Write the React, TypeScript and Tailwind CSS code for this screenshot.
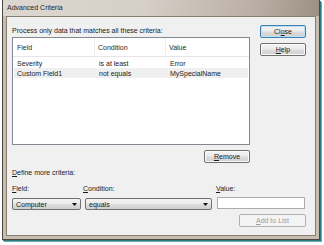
const font = { fontFamily: '"Liberation Sans", Arial, sans-serif' };

function Btn({ label, u, wide = 'w-[46px]', variant = 'normal' }: { label: string; u: number; wide?: string; variant?: 'normal' | 'default' | 'disabled' }) {
  const border =
    variant === 'default'
      ? 'border-[#3c7fb1] shadow-[inset_0_0_0_1px_#b9e3f4]'
      : variant === 'disabled'
        ? 'border-[#adb2b5]'
        : 'border-[#707070] shadow-[inset_0_0_0_1px_#fbfbfb]';
  const bg =
    variant === 'disabled'
      ? 'bg-[#f4f4f4] text-[#9a9a9a]'
      : 'bg-[linear-gradient(180deg,#f3f3f3_0%,#ebebeb_48%,#dddddd_52%,#cfcfcf_100%)] text-[#1a1a1a]';
  return (
    <div className={`${wide} h-[13px] rounded-[2px] border ${border} ${bg} flex items-center justify-center text-[7px] leading-none`}>
      <span>
        {label.slice(0, u)}
        <span className="underline underline-offset-1">{label[u]}</span>
        {label.slice(u + 1)}
      </span>
    </div>
  );
}

function Combo({ text }: { text: string }) {
  return (
    <div className="h-[12px] rounded-[2px] border border-[#707070] bg-[linear-gradient(180deg,#f2f2f2_0%,#ebebeb_48%,#dddddd_52%,#cfcfcf_100%)] flex items-center justify-between pl-[3px] pr-[3px] text-[7px] leading-none text-[#1a1a1a]">
      <span>{text}</span>
      <svg width="5" height="3" viewBox="0 0 5 3">
        <path d="M0 0h5L2.5 3z" fill="#111" />
      </svg>
    </div>
  );
}

function Mn({ t }: { t: string }) {
  return (
    <span>
      <span className="underline underline-offset-1">{t[0]}</span>
      {t.slice(1)}
    </span>
  );
}

export default function App() {
  const rows = [
    { f: 'Severity', c: 'is at least', v: 'Error', sel: false },
    { f: 'Custom Field1', c: 'not equals', v: 'MySpecialName', sel: true },
  ];
  return (
    <div className="w-[324px] h-[245px] bg-white" style={font}>
      <div className="ml-[2px] w-[318px] h-[240px] flex flex-col border-x border-b border-[#4e4740] bg-[#c7bcb0] shadow-[1px_1px_0_#2f7a80,2px_2px_0_#6aa9ad]">
        <div className="h-[16px] flex items-center pl-[4px] text-[7px] text-[#1e1e1e] bg-[linear-gradient(100deg,#ddd7d1_0%,#d6cfc7_45%,#b9aea3_80%,#9c9085_100%)]">
          Advanced Criteria
        </div>
        <div className="flex-1 mx-[3px] mb-[3px] border border-[#8a7f75] bg-[#f0f0f0] pl-[5px] text-[7px] leading-none text-[#1a1a1a]">
          <div className="flex">
            <div className="w-[238px]">
              <div className="pt-[10px] h-[20px]">Process only data that matches all these criteria:</div>
              <div className="h-[108px] border border-[#828790] bg-white">
                <div className="h-[19px] flex items-center border-b border-[#e5e5e5] text-[#2a2a2a]">
                  <div className="w-[82px] h-full flex items-center pl-[4px] border-r border-[#ececec]">Field</div>
                  <div className="w-[71px] h-full flex items-center pl-[3px] border-r border-[#ececec]">Condition</div>
                  <div className="pl-[3px]">Value</div>
                </div>
                <div className="pt-[1px] px-[1px]">
                  {rows.map((r) => (
                    <div key={r.f} className={`h-[10px] flex items-center ${r.sel ? 'bg-[#efefef]' : ''}`}>
                      <div className="w-[82px] pl-[3px]">{r.f}</div>
                      <div className="w-[71px] pl-[3px]">{r.c}</div>
                      <div className="pl-[3px]">{r.v}</div>
                    </div>
                  ))}
                </div>
              </div>
            </div>
            <div className="ml-[10px] pt-[8px] flex flex-col gap-[5px]">
              <Btn label="Close" u={2} variant="default" />
              <Btn label="Help" u={0} />
            </div>
          </div>
          <div className="w-[238px] flex justify-end mt-[5px]">
            <Btn label="Remove" u={0} />
          </div>
          <div className="mt-[4px] h-[10px] flex items-center">
            <Mn t="Define more criteria:" />
          </div>
          <div className="grid grid-cols-[69px_127px_89px] gap-x-[4px]">
            <div className="mt-[6px] h-[10px] flex items-center"><Mn t="Field:" /></div>
            <div className="mt-[6px] h-[10px] flex items-center -ml-[2px]"><Mn t="Condition:" /></div>
            <div className="mt-[6px] h-[10px] flex items-center ml-[0px]"><Mn t="Value:" /></div>
            <div className="mt-[5px]"><Combo text="Computer" /></div>
            <div className="mt-[5px]"><Combo text="equals" /></div>
            <div className="mt-[4px] h-[12px] border border-[#abadb3] bg-white ml-[1px]" />
          </div>
          <div className="w-[294px] flex justify-end mt-[4px]">
            <Btn label="Add to List" u={0} wide="w-[67px]" variant="disabled" />
          </div>
        </div>
      </div>
    </div>
  );
}
